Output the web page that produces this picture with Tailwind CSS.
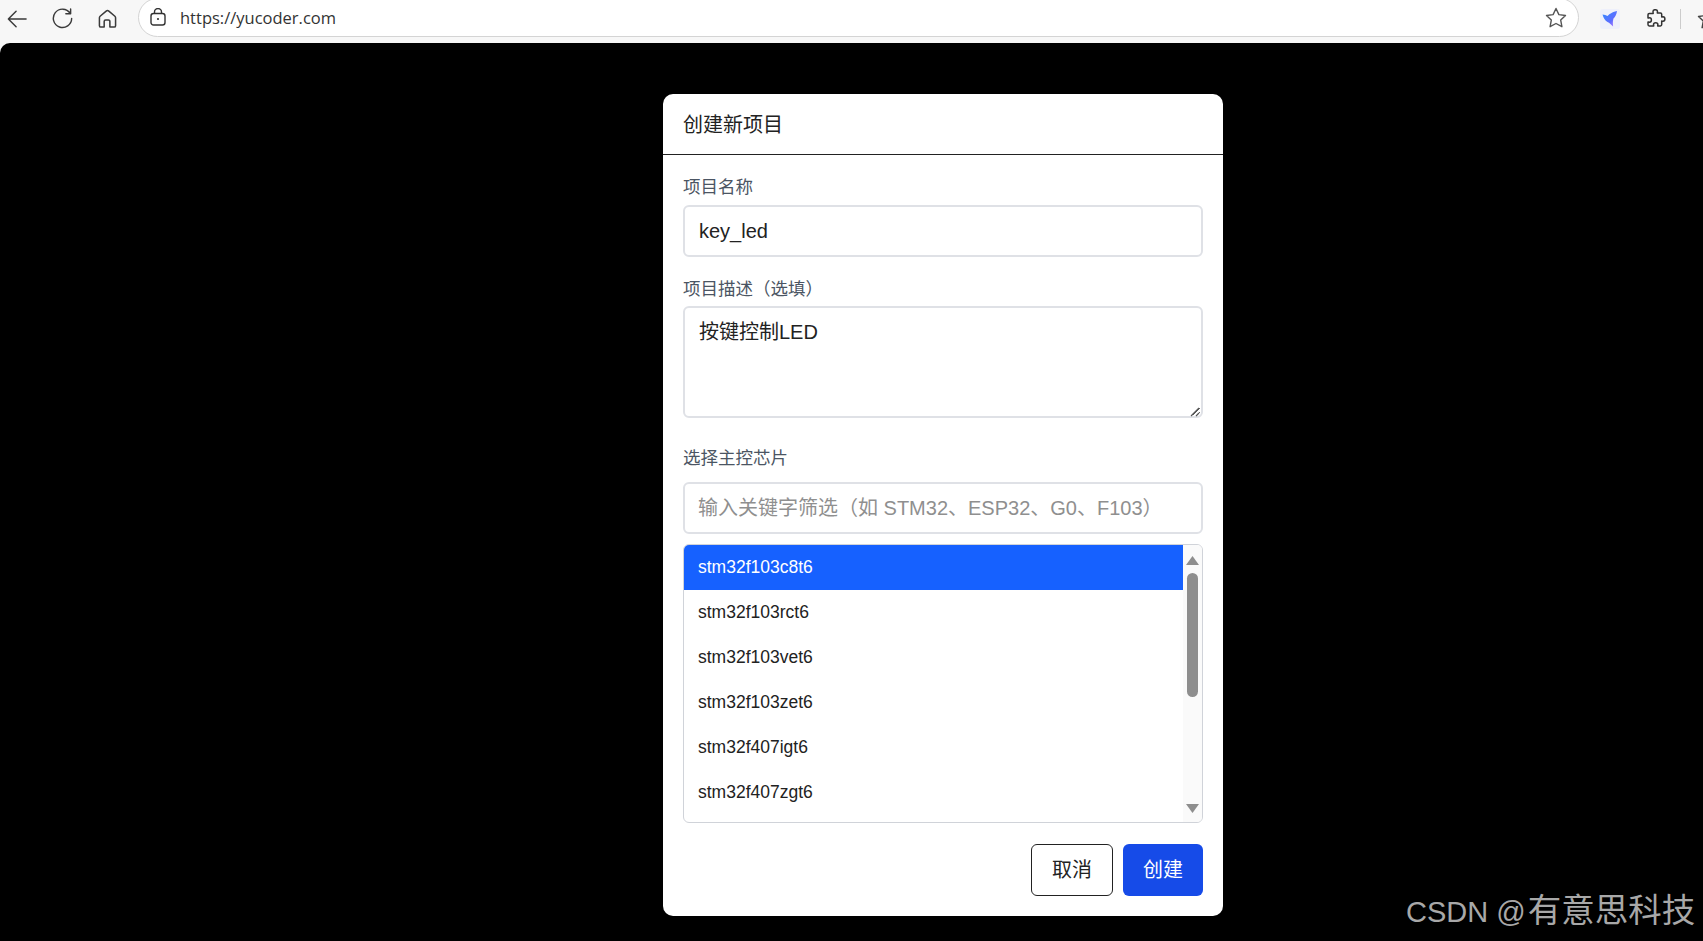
<!DOCTYPE html>
<html lang="zh-CN">
<head>
<meta charset="utf-8">
<title>创建新项目</title>
<script src="https://cdn.jsdelivr.net/npm/@tailwindcss/browser@4"></script>
</head>
<body class="w-[1703px] h-[941px] overflow-hidden bg-[#f7f7f7] font-['Liberation_Sans','Noto_Sans_CJK_SC',sans-serif] relative">
<header class="h-[43px] flex items-start text-[#333]">
  <div class="flex items-center h-[37px] pl-[7px] w-[138px]">
    <svg class="w-[20px] h-[20px] shrink-0" viewBox="0 0 22 22" fill="none" stroke="#3a3a3a" stroke-width="1.600" stroke-linecap="round" stroke-linejoin="round"><path d="M1.500 11H21M10 2.500 1.500 11l8.500 8.500"/></svg>
    <svg class="ml-[25px] w-[21px] h-[21px] shrink-0" viewBox="0 0 22 22" fill="none" stroke="#3a3a3a" stroke-width="1.500" stroke-linecap="round" stroke-linejoin="round"><path d="M19 5.500A9.600 9.600 0 1 0 20.600 11M19.500 1v5h-5"/></svg>
    <svg class="ml-[25px] w-[19px] h-[20px] shrink-0" viewBox="0 0 20 21" fill="none" stroke="#3a3a3a" stroke-width="1.600" stroke-linejoin="round"><path d="M8.600 2.200 2.200 7.600a2 2 0 0 0-.7 1.500v8.400a1.500 1.500 0 0 0 1.500 1.500h3.500v-6a1.500 1.500 0 0 1 1.500-1.500h3a1.500 1.500 0 0 1 1.500 1.500v6H17a1.500 1.500 0 0 0 1.500-1.500V9.100a2 2 0 0 0-.7-1.500L11.400 2.200a2.200 2.200 0 0 0-2.800 0Z"/></svg>
  </div>
  <div class="mt-[-2px] w-[1441px] h-[39px] shrink-0 bg-white rounded-[20px] border border-[#d4d4d4] flex items-center pl-[11px] pr-[11px]">
    <svg class="w-[16px] h-[18px] mb-[1px] shrink-0" viewBox="0 0 16 18" fill="none" stroke="#333" stroke-width="1.400"><rect x="1" y="5.500" width="14" height="11.500" rx="2.500"/><path d="M4.500 5.500V4a3.500 3.500 0 0 1 7 0v1.500"/><circle cx="8" cy="11" r="1.100" fill="#333" stroke="none"/></svg>
    <span class="ml-[14px] text-[16.500px] leading-[24px] text-[#333] font-['Open_Sans',sans-serif]">https://yucoder.com</span>
    <svg class="ml-auto w-[22px] h-[21px] shrink-0" viewBox="0 0 22 21" fill="none" stroke="#555" stroke-width="1.400" stroke-linejoin="round"><path d="m11 1.500 2.900 6.100 6.600.9-4.800 4.600 1.200 6.600L11 16.500l-5.900 3.200 1.200-6.600L1.500 8.500l6.600-.9Z"/></svg>
  </div>
  <div class="flex-1 flex items-center h-[37px] overflow-hidden">
    <div class="ml-[21px] w-[20px] h-[20px] shrink-0 rounded-[3px] bg-[#eef0fb] flex items-center justify-center">
      <svg class="w-[18px] h-[18px]" viewBox="0 0 18 18"><defs><linearGradient id="bird" x1="0" y1="0" x2="1" y2="1"><stop offset="0" stop-color="#2f8bff"/><stop offset=".6" stop-color="#5b6cff"/><stop offset="1" stop-color="#c77dff"/></linearGradient></defs><path d="M1.500 4.500c2 .2 3.500.6 5 1.500 1.500-1.500 4-3.800 9.500-5-.5 3.500-1.800 6-3.500 7.500-.6 1.800-.8 4-.4 8-1.800-1.800-3.500-3.500-5.600-4.500C4 10.500 2.500 8 1.500 4.500Z" fill="url(#bird)"/></svg>
    </div>
    <svg class="ml-[26px] w-[20px] h-[20px] shrink-0" viewBox="0 0 20 20" fill="none" stroke="#333" stroke-width="1.500" stroke-linejoin="round"><path d="M7 2.500c0-1.200 1-1.800 2.200-1.800 1.300 0 2.300.7 2.300 1.900 0 .6-.2 1-.2 1.400h3.100c.8 0 1.300.5 1.300 1.300V8c.4 0 .8-.2 1.300-.2 1.200 0 1.900 1 1.900 2.300s-.7 2.200-1.900 2.200c-.5 0-.9-.2-1.300-.2v3.500c0 .8-.5 1.300-1.300 1.300h-2.700c0-.4.200-.8.200-1.200 0-1.200-1-1.900-2.200-1.900s-2.200.7-2.200 1.900c0 .4.200.8.200 1.200H3.300c-.8 0-1.300-.5-1.300-1.300V13c.6 0 1 .2 1.500.2 1.200 0 1.900-1 1.900-2.200S4.700 8.800 3.500 8.800C3 8.800 2.600 9 2 9V5.800c0-.8.500-1.300 1.300-1.300h3.900C7.200 3.800 7 3.200 7 2.500Z"/></svg>
    <div class="ml-[14px] w-px h-[20px] shrink-0 bg-[#ccc]"></div>
    <svg class="ml-[16px] w-[22px] h-[21px] shrink-0" viewBox="0 0 22 21" fill="none" stroke="#444" stroke-width="1.400" stroke-linejoin="round"><path d="m11 1.500 2.900 6.100 6.600.9-4.800 4.600 1.200 6.600L11 16.500l-5.900 3.200 1.200-6.600L1.500 8.500l6.600-.9Z"/></svg>
  </div>
</header>
<main class="h-[898px] bg-black rounded-tl-[10px] pt-[51px] pl-[663px]">
  <section class="w-[560px] h-[822px] bg-white rounded-[10px] flex flex-col">
    <h2 class="h-[61px] pt-[2px] border-b border-[#222] px-5 flex items-center text-[20px] font-normal text-[#222]">创建新项目</h2>
    <div class="px-5 pt-[19px] flex flex-col">
      <label class="text-[17.500px] leading-[26px] text-[#4b5563]">项目名称</label>
      <input class="mt-[5px] h-[52px] border-2 border-[#dfe1e6] rounded-[6px] px-[14px] text-[20px] text-[#222] outline-none" value="key_led">
      <label class="mt-[19px] text-[17.500px] leading-[26px] text-[#4b5563]">项目描述（选填）</label>
      <div class="mt-[4px] relative">
        <textarea class="w-full h-[112px] block border-2 border-[#dfe1e6] rounded-[6px] px-[14px] py-[11px] text-[20px] leading-[26px] text-[#222] outline-none">按键控制LED</textarea>
        <svg class="absolute right-[3px] bottom-[1px] w-[10px] h-[10px] pointer-events-none" viewBox="0 0 10 10" fill="none" stroke="#555" stroke-width="1.200"><path d="M1 9 9 1M6 9l3-3"/></svg>
      </div>
      <label class="mt-[27px] text-[17.500px] leading-[26px] text-[#4b5563]">选择主控芯片</label>
      <input class="mt-[11px] h-[52px] border-2 border-[#dfe1e6] rounded-[6px] px-[13px] text-[20px] text-[#222] outline-none placeholder:text-[#8f8f8f]" placeholder="输入关键字筛选（如 STM32、ESP32、G0、F103）">
      <div class="mt-[10px] h-[279px] border border-[#d0d3d9] rounded-[6px] flex overflow-hidden text-[17.500px] text-[#222]">
        <ul class="flex-1">
          <li class="h-[45px] flex items-center pl-[14px] bg-[#1661ff] text-white">stm32f103c8t6</li>
          <li class="h-[45px] flex items-center pl-[14px]">stm32f103rct6</li>
          <li class="h-[45px] flex items-center pl-[14px]">stm32f103vet6</li>
          <li class="h-[45px] flex items-center pl-[14px]">stm32f103zet6</li>
          <li class="h-[45px] flex items-center pl-[14px]">stm32f407igt6</li>
          <li class="h-[45px] flex items-center pl-[14px]">stm32f407zgt6</li>
        </ul>
        <div class="w-[19px] bg-[#fafafa] flex flex-col items-center" aria-hidden="true">
          <svg class="mt-[11px] w-[13px] h-[9px]" viewBox="0 0 13 9"><path d="M6.500 0 13 9H0Z" fill="#8e8e8e"/></svg>
          <div class="mt-[8px] w-[11px] h-[124px] rounded-full bg-[#8e8e8e]"></div>
          <svg class="mt-auto mb-[9px] w-[13px] h-[9px]" viewBox="0 0 13 9"><path d="M0 0h13L6.500 9Z" fill="#8e8e8e"/></svg>
        </div>
      </div>
      <div class="mt-[21px] flex justify-end gap-[10px]">
        <button class="w-[82px] h-[52px] border border-[#222] rounded-[6px] bg-white text-[20px] text-[#222]">取消</button>
        <button class="w-[80px] h-[52px] rounded-[6px] bg-[#164be8] text-[20px] text-white">创建</button>
      </div>
    </div>
  </section>
</main>
<div class="absolute left-[1406px] bottom-[9px] text-[29px] leading-[40px] text-[#a8a8a8] whitespace-nowrap">CSDN @<span class="text-[33.500px] ml-[2px]">有意思科技</span></div>
</body>
</html>
